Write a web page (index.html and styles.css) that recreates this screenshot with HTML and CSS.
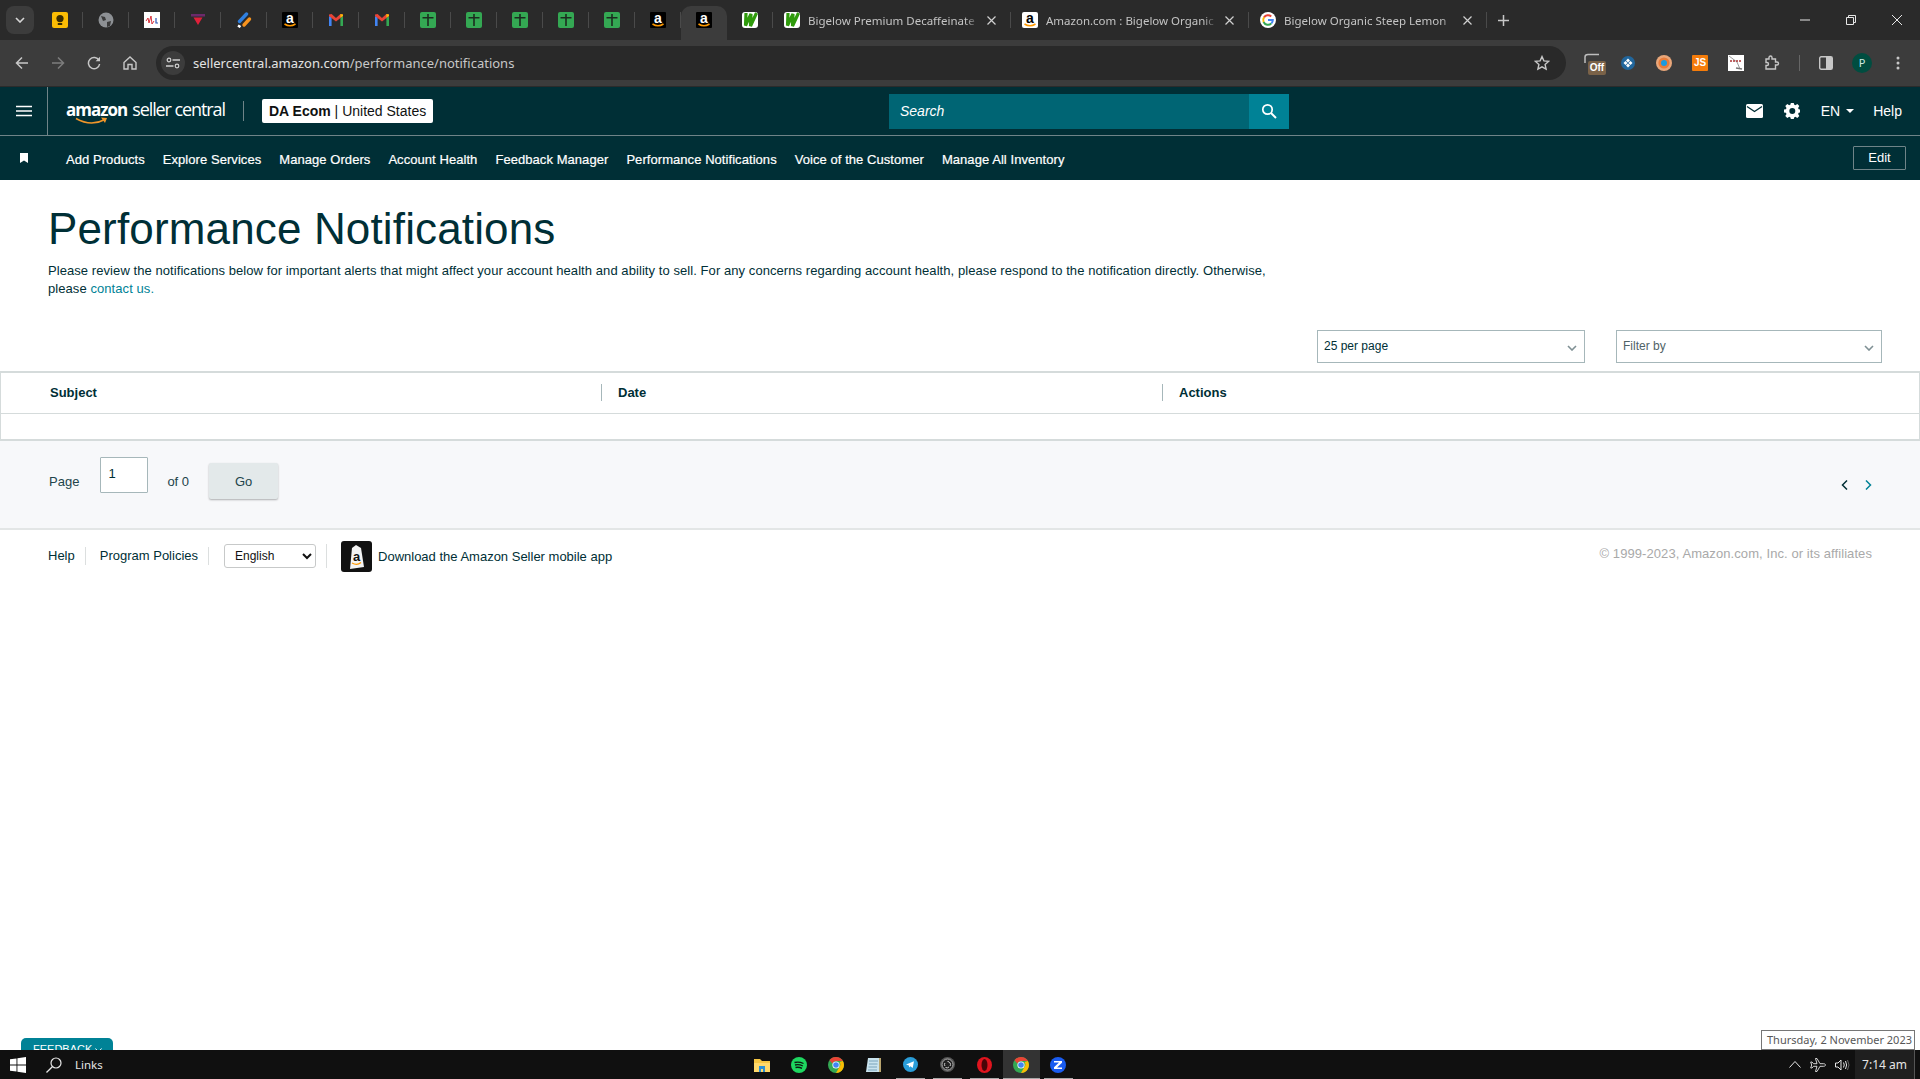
FILE: index.html
```html
<!DOCTYPE html>
<html lang="en">
<head>
    <meta charset="UTF-8">
    <meta name="viewport" content="width=device-width, initial-scale=1.0">
    <title>Performance Notifications</title>
    <link rel="stylesheet" href="styles.css">
</head>
<body>
    <!-- shared favicons -->
    <svg class="sprites" width="0" height="0">
        <symbol id="fav-amazon" viewBox="0 0 16 16">
            <rect width="16" height="16" rx="1" fill="#000"/>
            <text x="8" y="10.5" font-family="Liberation Sans, sans-serif" font-size="14" font-weight="700" fill="#fff" text-anchor="middle">a</text>
            <path d="M2.5 12Q8 15.6 13.5 12" fill="none" stroke="#f90" stroke-width="1.5"/>
        </symbol>
        <symbol id="fav-amazon-white" viewBox="0 0 16 16">
            <rect width="16" height="16" rx="2" fill="#fff"/>
            <text x="8" y="10.5" font-family="Liberation Sans, sans-serif" font-size="14" font-weight="700" fill="#000" text-anchor="middle">a</text>
            <path d="M2.5 12Q8 15.6 13.5 12" fill="none" stroke="#f90" stroke-width="1.5"/>
        </symbol>
        <symbol id="fav-green" viewBox="0 0 16 16">
            <rect width="16" height="16" rx="2" fill="#34a853"/>
            <path d="M7.2 2h1.600v3h4.700v1.500H8.800V14H7.200V6.500H2.500V5h4.700z" fill="#1c2b20"/>
        </symbol>
        <symbol id="fav-gmail" viewBox="0 0 16 16">
            <path d="M1 14V4l2.600 1.600V14z" fill="#4285f4"/>
            <path d="M12.400 14V5.600L15 4v10z" fill="#34a853"/>
            <path d="M1 4l7 5.400L15 4V2.400L12.400 2 8 6 3.600 2 1 2.400z" fill="#ea4335"/>
            <path d="M12.400 5.600L15 4V2.400L12.400 2z" fill="#fbbc04"/>
        </symbol>
        <symbol id="fav-w" viewBox="0 0 16 16">
            <rect width="16" height="16" rx="3" fill="#fff"/>
            <path d="M4 1L3.500 13.500 9 2 8.500 14 14.500 1" fill="none" stroke="#2f9a0c" stroke-width="3.200"/>
        </symbol>
        <symbol id="fav-chrome" viewBox="0 0 16 16">
            <circle cx="8" cy="8" r="8" fill="#34a853"/>
            <path d="M8 0a8 8 0 0 1 6.900 4H8a4 4 0 0 0-3.700 2.500L1.500 3.200A8 8 0 0 1 8 0z" fill="#ea4335"/>
            <path d="M14.900 4A8 8 0 0 1 8 16l3.400-6a4 4 0 0 0 0-5z" fill="#fbbc04"/>
            <circle cx="8" cy="8" r="3.600" fill="#fff"/>
            <circle cx="8" cy="8" r="2.800" fill="#4285f4"/>
        </symbol>
    </svg>

    <!-- browser chrome -->
    <div class="tabstrip">
        <div class="tab-search">
            <svg width="10" height="6" viewBox="0 0 10 6"><path d="M1 1l4 4 4-4" fill="none" stroke="#d6d6d6" stroke-width="1.600"/></svg>
        </div>
        <div class="pinned">
            <svg width="16" height="16" viewBox="0 0 16 16"><rect width="16" height="16" rx="2" fill="#fbbc04"/><circle cx="8" cy="6.600" r="3.600" fill="#3a2c00"/><rect x="5.800" y="11" width="4.400" height="2" fill="#3a2c00"/></svg>
        </div>
        <div class="pinned">
            <svg width="16" height="16" viewBox="0 0 16 16"><circle cx="8" cy="8" r="7.500" fill="#8d9094"/><path d="M3 4l4 1 1 3-3 1zM9 10l4-1-1 5-3 1z" fill="#3a3a3a"/></svg>
        </div>
        <div class="pinned">
            <svg width="16" height="16" viewBox="0 0 16 16"><rect width="16" height="16" fill="#fff"/><path d="M2 9l2-3 1 5 2-7 1 8 2-3" fill="none" stroke="#d8323c"/><path d="M12 6v5h2" fill="none" stroke="#2a55b5" stroke-width="1.200"/></svg>
        </div>
        <div class="pinned">
            <svg width="16" height="16" viewBox="0 0 16 16"><rect x="1" y="2" width="14" height="2.500" fill="#6b2a6b"/><path d="M3.500 5.500h9L8 13z" fill="#e0203a"/></svg>
        </div>
        <div class="pinned">
            <svg width="16" height="16" viewBox="0 0 16 16"><path d="M3.500 9.500L10.500 2" stroke="#2f7fe0" stroke-width="3.400" stroke-linecap="round"/><path d="M8 13L13.500 7" stroke="#f7931e" stroke-width="3.400" stroke-linecap="round"/><path d="M2 13.500l2.500 1.500" stroke="#fff" stroke-width="2.600"/></svg>
        </div>
        <div class="pinned"><svg width="16" height="16"><use href="#fav-amazon"/></svg></div>
        <div class="pinned"><svg width="16" height="16"><use href="#fav-gmail"/></svg></div>
        <div class="pinned"><svg width="16" height="16"><use href="#fav-gmail"/></svg></div>
        <div class="pinned"><svg width="16" height="16"><use href="#fav-green"/></svg></div>
        <div class="pinned"><svg width="16" height="16"><use href="#fav-green"/></svg></div>
        <div class="pinned"><svg width="16" height="16"><use href="#fav-green"/></svg></div>
        <div class="pinned"><svg width="16" height="16"><use href="#fav-green"/></svg></div>
        <div class="pinned"><svg width="16" height="16"><use href="#fav-green"/></svg></div>
        <div class="pinned"><svg width="16" height="16"><use href="#fav-amazon"/></svg></div>
        <div class="pinned pinned-active"><svg width="16" height="16"><use href="#fav-amazon"/></svg></div>
        <div class="pinned"><svg width="16" height="16"><use href="#fav-w"/></svg></div>
        <div class="tab">
            <svg width="16" height="16"><use href="#fav-w"/></svg>
            <span class="tab-title">Bigelow Premium Decaffeinate</span>
            <svg class="tab-close" width="9" height="9" viewBox="0 0 9 9"><path d="M.5.500l8 8M8.500.500l-8 8" stroke="#d0d0d0" stroke-width="1.200"/></svg>
        </div>
        <div class="tab">
            <svg width="16" height="16"><use href="#fav-amazon-white"/></svg>
            <span class="tab-title">Amazon.com : Bigelow Organic</span>
            <svg class="tab-close" width="9" height="9" viewBox="0 0 9 9"><path d="M.5.500l8 8M8.500.500l-8 8" stroke="#d0d0d0" stroke-width="1.200"/></svg>
        </div>
        <div class="tab">
            <svg width="16" height="16" viewBox="0 0 16 16"><circle cx="8" cy="8" r="8" fill="#fff"/><path d="M4 5.400A4.800 4.800 0 0 1 11.200 4.400" fill="none" stroke="#ea4335" stroke-width="2"/><path d="M3.600 10A4.800 4.800 0 0 1 4 5.400" fill="none" stroke="#fbbc04" stroke-width="2"/><path d="M11.400 11.400A4.800 4.800 0 0 1 3.600 10" fill="none" stroke="#34a853" stroke-width="2"/><path d="M8 8h4.800a4.800 4.800 0 0 1-1.400 3.400" fill="none" stroke="#4285f4" stroke-width="2"/></svg>
            <span class="tab-title">Bigelow Organic Steep Lemon</span>
            <svg class="tab-close" width="9" height="9" viewBox="0 0 9 9"><path d="M.5.500l8 8M8.500.500l-8 8" stroke="#d0d0d0" stroke-width="1.200"/></svg>
        </div>
        <div class="tab-new">
            <svg width="11" height="11" viewBox="0 0 11 11"><path d="M5.500 0v11M0 5.500h11" stroke="#c7c7c7" stroke-width="1.500"/></svg>
        </div>
        <div class="win-controls">
            <div class="win-btn"><svg width="10" height="10" viewBox="0 0 10 10"><path d="M0 5h10" stroke="#e6e6e6"/></svg></div>
            <div class="win-btn"><svg width="10" height="10" viewBox="0 0 10 10"><path d="M.5 2.500h7v7h-7zM2.500 2.500v-2h7v7h-2" fill="none" stroke="#e6e6e6"/></svg></div>
            <div class="win-btn"><svg width="10" height="10" viewBox="0 0 10 10"><path d="M0 0l10 10M10 0L0 10" stroke="#e6e6e6"/></svg></div>
        </div>
    </div>

    <div class="toolbar">
        <div class="tool-btn"><svg width="14" height="14" viewBox="0 0 14 14"><path d="M13 7H2M7 1.500L1.500 7 7 12.500" fill="none" stroke="#c7c7c7" stroke-width="1.500"/></svg></div>
        <div class="tool-btn"><svg width="14" height="14" viewBox="0 0 14 14"><path d="M1 7h11M7 1.500L12.500 7 7 12.500" fill="none" stroke="#7d7d7d" stroke-width="1.500"/></svg></div>
        <div class="tool-btn"><svg width="14" height="14" viewBox="0 0 14 14"><path d="M12 4.500A5.600 5.600 0 1 0 12.600 8" fill="none" stroke="#c7c7c7" stroke-width="1.500"/><path d="M13 .8v4.400H8.600z" fill="#c7c7c7"/></svg></div>
        <div class="tool-btn"><svg width="14" height="14" viewBox="0 0 14 14"><path d="M1 6.600L7 1l6 5.600V13H9V8.500H5V13H1z" fill="none" stroke="#c7c7c7" stroke-width="1.400"/></svg></div>
        <div class="urlbar">
            <span class="url-tune">
                <svg width="14" height="12" viewBox="0 0 14 12"><circle cx="3" cy="3" r="1.800" fill="none" stroke="#d0d0d0" stroke-width="1.200"/><path d="M6.500 3H14M0 9h7.500" stroke="#d0d0d0" stroke-width="1.300"/><circle cx="11" cy="9" r="1.800" fill="none" stroke="#d0d0d0" stroke-width="1.200"/></svg>
            </span>
            <span class="url-text">sellercentral.amazon.com<span class="url-path">/performance/notifications</span></span>
            <svg class="url-star" width="16" height="16" viewBox="0 0 16 16"><path d="M8 1.600l1.900 4.300 4.700.5-3.500 3.100 1 4.600L8 11.800l-4.100 2.300 1-4.600L1.400 6.400l4.700-.5z" fill="none" stroke="#c7c7c7" stroke-width="1.400"/></svg>
        </div>
        <div class="tool-btn">
            <span class="ext-off"><svg width="16" height="10" viewBox="0 0 16 10"><path d="M1 10V4q0-2.500 3-2.500h11" fill="none" stroke="#bdbdbd" stroke-width="1.500"/></svg><b>Off</b></span>
        </div>
        <div class="tool-btn"><svg width="14" height="14" viewBox="0 0 14 14"><circle cx="7" cy="7" r="7" fill="#21669c"/><path d="M7 2.500l2 2-2 2-2-2zM7 7.500l2 2-2 2-2-2zM2.500 7l2-2 2 2-2 2zM7.500 7l2-2 2 2-2 2z" fill="#fff"/></svg></div>
        <div class="tool-btn"><svg width="16" height="16" viewBox="0 0 16 16"><circle cx="8" cy="8" r="8" fill="#e9a77a"/><circle cx="8" cy="8" r="5.600" fill="#e87c3a"/><circle cx="8" cy="8" r="3" fill="#1a9be0"/></svg></div>
        <div class="tool-btn"><span class="ext-js">JS</span></div>
        <div class="tool-btn"><svg width="16" height="16" viewBox="0 0 16 16"><rect width="16" height="16" fill="#fff"/><path d="M1 1l8 6 3 7" fill="none" stroke="#9a9a9a"/><path d="M2 6h12" stroke="#a33" stroke-width="1.600" stroke-dasharray="2 1"/><path d="M8 13l6 1" stroke="#777" stroke-width="1.500"/></svg></div>
        <div class="tool-btn"><svg width="16" height="16" viewBox="0 0 16 16"><path d="M2 4h3V2.500a1.500 1.500 0 0 1 3 0V4h3.500v3H13a1.500 1.500 0 0 1 0 3h-1.500v4H2v-3.500h1a1.500 1.500 0 0 0 0-3H2z" fill="none" stroke="#c7c7c7" stroke-width="1.400"/></svg></div>
        <div class="tool-sep"><span></span></div>
        <div class="tool-btn"><svg width="14" height="14" viewBox="0 0 14 14"><rect x=".7" y=".7" width="12.600" height="12.600" rx="1.500" fill="none" stroke="#c7c7c7" stroke-width="1.400"/><rect x="7" y="1" width="6" height="12" fill="#c7c7c7"/></svg></div>
        <div class="tool-btn"><span class="avatar">P</span></div>
        <div class="tool-btn"><svg width="4" height="14" viewBox="0 0 4 14"><circle cx="2" cy="2" r="1.500" fill="#c7c7c7"/><circle cx="2" cy="7" r="1.500" fill="#c7c7c7"/><circle cx="2" cy="12" r="1.500" fill="#c7c7c7"/></svg></div>
    </div>

    <!-- seller central header -->
    <header class="sc-header">
        <div class="menu-cell">
            <svg width="16" height="12" viewBox="0 0 16 12"><path d="M0 1.500h16M0 6h16M0 10.500h16" stroke="#fff" stroke-width="1.700"/></svg>
        </div>
        <div class="logo">
            <span class="logo-amazon">amazon</span><span class="logo-seller">seller central</span>
            <svg class="logo-smile" width="34" height="8" viewBox="0 0 34 8"><path d="M1 1.500Q16 10 30 2.500" fill="none" stroke="#f0962a" stroke-width="1.500"/><path d="M26 .5l6 .5-2 5z" fill="#f0962a"/></svg>
        </div>
        <span class="logo-sep"></span>
        <div class="account-badge"><b>DA Ecom</b> | United States</div>
        <div class="search">
            <div class="search-input">Search</div>
            <div class="search-btn">
                <svg width="16" height="16" viewBox="0 0 16 16"><circle cx="6.500" cy="6.500" r="4.700" fill="none" stroke="#fff" stroke-width="1.700"/><path d="M10 10l5 5" stroke="#fff" stroke-width="1.900"/></svg>
            </div>
        </div>
        <div class="header-right">
            <svg width="17" height="14" viewBox="0 0 17 14"><rect width="17" height="14" rx="1.500" fill="#fff"/><path d="M1 2.500l7.500 5 7.500-5" fill="none" stroke="#002f36" stroke-width="1.400"/></svg>
            <svg class="gear" width="16" height="16" viewBox="0 0 16 16"><path fill="#fff" fill-rule="evenodd" d="M6.600 0h2.800l.4 2.200 1.300.6 1.900-1.200 2 2-1.200 1.900.6 1.300 2.100.4v2.800l-2.100.4-.6 1.300 1.200 1.900-2 2-1.900-1.200-1.300.6-.4 2.200H6.600l-.4-2.200-1.300-.6L3 15.600l-2-2 1.200-1.900-.6-1.300L-.5 10V7.200l2.100-.4.6-1.300L1 3.600l2-2 1.900 1.200 1.300-.6zM8 5.500a3 3 0 1 0 0 6 3 3 0 0 0 0-6z" transform="translate(.3 -.6)"/></svg>
            <span class="lang">EN<i class="caret"></i></span>
            <span class="help">Help</span>
        </div>
    </header>
    <nav class="sc-nav">
        <svg class="nav-mark" width="8" height="10" viewBox="0 0 8 10"><path d="M0 0h8v10L4 7.500 0 10z" fill="#fff"/></svg>
        <a>Add Products</a>
        <a>Explore Services</a>
        <a>Manage Orders</a>
        <a>Account Health</a>
        <a>Feedback Manager</a>
        <a>Performance Notifications</a>
        <a>Voice of the Customer</a>
        <a>Manage All Inventory</a>
        <button class="nav-edit">Edit</button>
    </nav>

    <main class="content">
        <div class="page-head">
            <h1>Performance Notifications</h1>
            <p>Please review the notifications below for important alerts that might affect your account health and ability to sell. For any concerns regarding account health, please respond to the notification directly. Otherwise, please <a href="#">contact us.</a></p>
        </div>

        <div class="table-controls">
            <div class="fake-select select-page">25 per page
                <svg width="10" height="6" viewBox="0 0 10 6"><path d="M1 1l4 4 4-4" fill="none" stroke="#7f9094" stroke-width="1.600"/></svg>
            </div>
            <div class="fake-select select-filter">Filter by
                <svg width="10" height="6" viewBox="0 0 10 6"><path d="M1 1l4 4 4-4" fill="none" stroke="#7f9094" stroke-width="1.600"/></svg>
            </div>
        </div>

        <div class="notif-table">
            <div class="notif-head">
                <div class="col col-subject">Subject</div>
                <div class="col col-date">Date</div>
                <div class="col col-actions">Actions</div>
            </div>
            <div class="notif-empty"></div>
        </div>

        <div class="pager">
            <span class="pager-label">Page</span>
            <input class="pager-input" type="text" value="1">
            <span class="pager-of">of 0</span>
            <button class="pager-go">Go</button>
            <div class="pager-arrows">
                <svg width="7" height="10" viewBox="0 0 7 10"><path d="M6 .5L1.500 5 6 9.500" fill="none" stroke="#002f36" stroke-width="1.500"/></svg>
                <svg width="7" height="10" viewBox="0 0 7 10"><path d="M1 .5L5.500 5 1 9.500" fill="none" stroke="#008296" stroke-width="1.500"/></svg>
            </div>
        </div>

        <footer class="sc-footer">
            <a class="foot-link">Help</a>
            <a class="foot-link">Program Policies</a>
            <div class="foot-cell">
                <select class="foot-select"><option>English</option></select>
            </div>
            <svg class="app-icon" width="31" height="31" viewBox="0 0 31 31">
                <rect width="31" height="31" rx="3" fill="#111"/>
                <path d="M11 7l4-3 5 3 3 19-14 2z" fill="#f3f3f3"/>
                <text x="15.500" y="20" font-family="Liberation Sans, sans-serif" font-size="13" font-weight="700" fill="#111" text-anchor="middle">a</text>
                <path d="M11 22q5 3 9-.5" fill="none" stroke="#f90" stroke-width="1.300"/>
            </svg>
            <span class="app-text">Download the Amazon Seller mobile app</span>
            <span class="copyright">&copy; 1999-2023, Amazon.com, Inc. or its affiliates</span>
        </footer>
    </main>

    <!-- windows taskbar -->
    <div class="feedback">FEEDBACK
        <svg width="7" height="5" viewBox="0 0 7 5"><path d="M.5.500l3 3.500 3-3.500" fill="none" stroke="#fff"/></svg>
    </div>
    <div class="date-tip">Thursday, 2 November 2023</div>
    <div class="taskbar">
        <svg class="win-logo" width="16" height="16" viewBox="0 0 16 16"><path fill="#fff" d="M0 2.300l6.500-.9v6.200H0zM7.400 1.300L16 0v7.600H7.400zM0 8.400h6.500v6.200L0 13.700zM7.400 8.400H16V16l-8.600-1.300z"/></svg>
        <svg class="task-search" width="16" height="16" viewBox="0 0 16 16"><circle cx="10" cy="6" r="5" fill="none" stroke="#e6e6e6" stroke-width="1.200"/><path d="M6.300 9.700L.5 15.500" stroke="#e6e6e6" stroke-width="1.300"/></svg>
        <span class="task-links">Links</span>
        <div class="task-apps">
            <div class="task-app"><svg width="16" height="14" viewBox="0 0 16 14"><path d="M0 1h6l2 2h8v11H0z" fill="#f5c543"/><path d="M0 5h16v9H0z" fill="#ffd96b"/><path d="M5 8h6v6H9v-3H7v3H5z" fill="#2a8fd6"/></svg></div>
            <div class="task-app"><svg width="16" height="16" viewBox="0 0 16 16"><circle cx="8" cy="8" r="8" fill="#1ed760"/><path d="M3.500 5.500q4.500-1.200 9 1M4 8q4-1 7.800 1M4.500 10.500q3.500-.8 6.500.9" fill="none" stroke="#0c1a10" stroke-width="1.300"/></svg></div>
            <div class="task-app"><svg width="16" height="16"><use href="#fav-chrome"/></svg></div>
            <div class="task-app"><svg width="15" height="16" viewBox="0 0 15 16"><path d="M2 1h12v14H0z" fill="#c9e3ee"/><path d="M13 1h2v14h-2z" fill="#b9a56f"/><path d="M3 4h9M3 7h8.500M2.500 10H11M2 13h9" stroke="#7aa4bb"/></svg></div>
            <div class="task-app open"><svg width="15" height="15" viewBox="0 0 15 15"><circle cx="7.500" cy="7.500" r="7.500" fill="#2a9dd8"/><path d="M3 7.500l8-3.200-1.300 6.700-2.300-1.700-1.200 1.200-.3-2z" fill="#fff"/></svg></div>
            <div class="task-app open"><svg width="15" height="15" viewBox="0 0 15 15"><circle cx="7.500" cy="7.500" r="7.500" fill="#555"/><circle cx="7.500" cy="7.500" r="5.500" fill="#222" stroke="#aaa"/><path d="M7.500 4.500a3 3 0 0 1 2.600 4.500M4.900 9a3 3 0 0 1 0-3M5.500 10.500a3 3 0 0 0 3.500-.5" fill="none" stroke="#ccc"/></svg></div>
            <div class="task-app open"><svg width="15" height="16" viewBox="0 0 15 16"><ellipse cx="7.500" cy="8" rx="7.500" ry="8" fill="#e0141e"/><ellipse cx="7.500" cy="8" rx="3" ry="6" fill="#4a0508"/></svg></div>
            <div class="task-app open task-app-active"><svg width="16" height="16"><use href="#fav-chrome"/></svg></div>
            <div class="task-app open"><svg width="16" height="16" viewBox="0 0 16 16"><circle cx="8" cy="8" r="8" fill="#1a5cf0"/><path d="M4 4h8v1.800L7 10.500h5V12H4v-1.800L9 5.500H4z" fill="#fff"/></svg></div>
        </div>
        <div class="tray">
            <svg width="12" height="7" viewBox="0 0 12 7"><path d="M.5 6.500l5.500-6 5.500 6" fill="none" stroke="#e6e6e6"/></svg>
            <svg width="16" height="14" viewBox="0 0 16 14"><path d="M15.500 7c0-.8-1-1.300-2-1.300H10L7 .5H5.500l1.500 5.200H3.500L2 4H.7l1 3-1 3H2l1.500-1.700H7L5.500 13.500H7l3-5.200h3.500c1 0 2-.5 2-1.300z" fill="none" stroke="#e6e6e6" stroke-width=".9"/></svg>
            <svg width="16" height="12" viewBox="0 0 16 12"><path d="M.5 4h2.500L6 1v10L3 8H.5z" fill="none" stroke="#e6e6e6"/><path d="M8.500 3.500q1.500 2.500 0 5M10.500 2q2.200 4 0 8" fill="none" stroke="#e6e6e6"/><path d="M12.500 1q3 5 0 10" fill="none" stroke="#666"/></svg>
            <span class="clock">7:14 am</span>
        </div>
    </div>
</body>
</html>
```

FILE: styles.css
```css
* {
    box-sizing: border-box;
}
html, body {
    margin: 0;
    height: 100%;
}
body {
    display: flex;
    flex-direction: column;
    position: relative;
    overflow: hidden;
    font-family: "Liberation Sans", Arial, sans-serif;
    font-size: 13px;
    color: #002f36;
    background: #fff;
}
.sprites {
    position: absolute;
}

/* browser tabs */
.tabstrip {
    display: flex;
    align-items: center;
    height: 40px;
    padding-left: 6px;
    background: #2a2a2a;
    font-family: "Noto Sans", sans-serif;
    font-size: 11.5px;
    color: #c4c4c4;
}
.tab-search {
    display: flex;
    align-items: center;
    justify-content: center;
    width: 28px;
    height: 28px;
    margin: 0 2.5px 0 0;
    border-radius: 8px;
    background: #3c3c3c;
}
.pinned {
    display: flex;
    align-items: center;
    justify-content: center;
    flex: none;
    width: 46px;
    height: 40px;
    position: relative;
}
.pinned::after, .tab::after {
    content: "";
    position: absolute;
    right: 0;
    top: 12px;
    height: 16px;
    width: 1px;
    background: #4a4a4a;
}
.pinned-active {
    height: 34px;
    margin-top: 6px;
    padding-bottom: 6px;
    border-radius: 10px 10px 0 0;
    background: #3c3c3c;
}
.pinned-active::after {
    display: none;
}
.tab {
    display: flex;
    align-items: center;
    flex: none;
    position: relative;
    width: 238px;
    height: 40px;
    padding: 0 15px 0 11.5px;
}
.tab svg {
    flex: none;
}
.tab-title {
    flex: 1;
    margin-left: 8px;
    overflow: hidden;
    white-space: nowrap;
    -webkit-mask-image: linear-gradient(to right, #000 92%, transparent);
    mask-image: linear-gradient(to right, #000 92%, transparent);
}
.tab-close {
    margin-left: 8px;
}
.tab-new {
    display: flex;
    margin-left: 11px;
}
.win-controls {
    display: flex;
    margin-left: auto;
}
.win-btn {
    display: flex;
    align-items: center;
    justify-content: center;
    width: 46px;
    height: 40px;
}

/* browser toolbar */
.toolbar {
    display: flex;
    align-items: center;
    height: 47px;
    padding: 0 4px 1px;
    background: #3c3c3c;
    border-bottom: 1px solid #2b2b2b;
}
.tool-btn {
    display: flex;
    align-items: center;
    justify-content: center;
    flex: none;
    width: 36px;
    height: 34px;
}
.tool-sep {
    display: flex;
    justify-content: center;
    width: 18px;
}
.tool-sep span {
    width: 1px;
    height: 16px;
    background: #666;
}
.urlbar {
    display: flex;
    align-items: center;
    flex: 1;
    height: 34px;
    margin: 0 8px;
    padding: 0 16px 0 5px;
    border-radius: 17px;
    background: #292929;
    font-family: "Noto Sans", sans-serif;
    font-size: 13px;
    color: #e3e3e3;
}
.url-tune {
    display: flex;
    align-items: center;
    justify-content: center;
    width: 24px;
    height: 24px;
    margin-right: 8px;
    border-radius: 50%;
    background: #3c3c3c;
}
.url-path {
    color: #c7c7c7;
}
.url-star {
    margin-left: auto;
}
.ext-off {
    display: block;
    position: relative;
    width: 22px;
    height: 22px;
    margin-left: 6px;
    margin-top: 2px;
}
.ext-off svg {
    position: absolute;
    top: 0;
    left: 0;
}
.ext-off b {
    position: absolute;
    right: 0;
    bottom: 0;
    width: 18px;
    height: 14px;
    border-radius: 2px;
    background: #7a6248;
    color: #fff;
    font-size: 10px;
    line-height: 14px;
    text-align: center;
}
.ext-js {
    width: 16px;
    height: 16px;
    border-radius: 1px;
    background: #f57c0a;
    color: #fff;
    font-size: 10px;
    font-weight: 700;
    line-height: 16px;
    text-align: center;
}
.avatar {
    width: 20px;
    height: 20px;
    border-radius: 50%;
    background: #004d40;
    color: #cfe8e0;
    font-family: "Noto Sans", sans-serif;
    font-size: 11px;
    line-height: 20px;
    text-align: center;
}

/* seller central header */
.sc-header {
    display: flex;
    align-items: center;
    height: 49px;
    background: #002f36;
    border-bottom: 1px solid #6f8488;
    color: #fff;
}
.menu-cell {
    display: flex;
    align-items: center;
    align-self: stretch;
    width: 48px;
    padding-left: 16px;
    border-right: 1px solid #6f8488;
}
.logo {
    position: relative;
    display: flex;
    align-items: baseline;
    width: 159px;
    margin-left: 18px;
    margin-top: -4px;
    font-family: "Open Sans", sans-serif;
    line-height: 24px;
    white-space: nowrap;
}
.logo-amazon {
    font-size: 17px;
    font-weight: 700;
    letter-spacing: -1px;
}
.logo-seller {
    margin-left: 5px;
    font-size: 18px;
    letter-spacing: -1.1px;
}
.logo-smile {
    position: absolute;
    left: 9px;
    top: 20px;
}
.logo-sep {
    width: 1px;
    height: 20px;
    margin: 0 18px;
    background: #6f8488;
}
.account-badge {
    width: 171px;
    height: 24px;
    padding-left: 7px;
    border-radius: 2px;
    background: #fff;
    color: #0f1111;
    font-size: 14px;
    line-height: 24px;
    white-space: nowrap;
}
.search {
    display: flex;
    height: 35px;
    margin-left: 456px;
}
.search-input {
    width: 360px;
    padding-left: 11px;
    background: #006574;
    font-size: 14px;
    font-style: italic;
    line-height: 35px;
}
.search-btn {
    display: flex;
    align-items: center;
    justify-content: center;
    width: 40px;
    background: #008296;
}
.header-right {
    display: flex;
    align-items: center;
    margin-left: auto;
    padding-right: 18px;
    font-size: 14px;
}
.gear {
    margin-left: 21px;
}
.lang {
    display: flex;
    align-items: center;
    margin-left: 21px;
}
.caret {
    margin-left: 6px;
    border: 4px solid transparent;
    border-top: 4px solid #fff;
    border-bottom: 0;
}
.help {
    margin-left: 19px;
}

/* shortcut nav */
.sc-nav {
    display: flex;
    align-items: center;
    height: 44px;
    padding: 0 14px 0 20px;
    background: #002f36;
    color: #fff;
    font-size: 13px;
}
.sc-nav a {
    margin-right: 18px;
    padding-top: 2px;
    letter-spacing: .06px;
    -webkit-text-stroke: .2px #fff;
}
.nav-mark {
    margin: -1px 38px 0 0;
}
.nav-edit {
    width: 53px;
    height: 24px;
    margin: 0 0 0 auto;
    padding: 0 0 2px;
    border: 1px solid #6f8488;
    border-radius: 1px;
    background: transparent;
    color: #fff;
    font-family: inherit;
    font-size: 13px;
}

/* page */
.content {
    flex: 1;
}
.page-head {
    padding: 24px 48px 0;
}
.page-head h1 {
    margin: 0;
    font-size: 44px;
    font-weight: 400;
    letter-spacing: .15px;
    line-height: 50px;
}
.page-head p {
    width: 1225px;
    margin: 8px 0 0;
    font-size: 13px;
    letter-spacing: .07px;
    line-height: 18px;
}
.page-head a {
    color: #008296;
    text-decoration: none;
}
.table-controls {
    display: flex;
    justify-content: flex-end;
    gap: 31px;
    margin-top: 32px;
    padding-right: 38px;
}
.fake-select {
    display: flex;
    align-items: center;
    justify-content: space-between;
    height: 33px;
    padding: 0 7px 2px 6px;
    border: 1px solid #a6b7ba;
    font-size: 12px;
}
.fake-select svg {
    margin-top: 4px;
}
.select-page {
    width: 268px;
}
.select-filter {
    width: 266px;
    color: #4f6367;
}
.notif-table {
    margin-top: 8px;
    border: 1px solid #d5dbdb;
    border-top-width: 2px;
    border-bottom-width: 2px;
}
.notif-head {
    display: flex;
    align-items: center;
    height: 41px;
    padding-bottom: 2px;
    border-bottom: 1px solid #d5dbdb;
    font-weight: 700;
}
.col {
    position: relative;
    padding-left: 17px;
}
.col-subject {
    width: 600px;
    padding-left: 49px;
}
.col-date {
    width: 561px;
}
.col-date::before, .col-actions::before {
    content: "";
    position: absolute;
    left: 0;
    top: -1px;
    width: 1px;
    height: 17px;
    background: #a6b7ba;
}
.notif-empty {
    height: 25px;
}
.pager {
    display: flex;
    height: 89px;
    padding: 16px 38px 0 49px;
    background: #f7f8fa;
    border-bottom: 2px solid #e3e6e6;
    font-size: 13px;
    color: #22444a;
}
.pager-label {
    margin-top: 17px;
}
.pager-input {
    width: 48px;
    height: 36px;
    margin-left: 21px;
    padding: 0 0 4px 7px;
    border: 1px solid #a6b7ba;
    border-radius: 1px;
    background: #fff;
    color: #002f36;
    font-family: inherit;
    font-size: 13px;
}
.pager-of {
    margin: 17px 0 0 19px;
}
.pager-go {
    width: 69px;
    height: 36px;
    margin: 6px 0 0 20px;
    border: 0;
    border-radius: 2px;
    background: #e3e9ea;
    box-shadow: 0 1px 2px rgba(0,0,0,.3);
    color: #22444a;
    font-family: inherit;
    font-size: 13px;
}
.pager-arrows {
    display: flex;
    gap: 17px;
    margin: 23px 10px 0 auto;
    height: 10px;
}
.sc-footer {
    display: flex;
    align-items: center;
    height: 52px;
    padding: 0 48px;
}
.foot-link {
    display: block;
    padding-right: 10px;
    margin-right: 14px;
    border-right: 1px solid #dcdfdf;
    line-height: 18px;
}
.foot-cell {
    display: flex;
    margin-left: 1px;
    padding-right: 10px;
    margin-right: 14px;
    border-right: 1px solid #dcdfdf;
}
.foot-select {
    width: 92px;
    height: 24px;
    padding-left: 6px;
    border: 1px solid #c7c9c9;
    border-radius: 3px;
    background: #fff;
    color: #111;
    font-family: inherit;
    font-size: 12px;
}
.app-icon {
    flex: none;
}
.app-text {
    margin-left: 6px;
}
.copyright {
    margin: -6px 0 0 auto;
    color: #a9a9a9;
    letter-spacing: .08px;
}

/* windows taskbar */
.taskbar {
    display: flex;
    align-items: center;
    flex: none;
    position: relative;
    z-index: 2;
    height: 29px;
    padding-left: 10px;
    background: #101010;
    color: #e6e6e6;
    font-family: "Noto Sans", sans-serif;
    font-size: 12px;
}
.task-search {
    margin-left: 20px;
}
.task-links {
    margin-left: 13px;
    font-size: 11.5px;
}
.task-apps {
    display: flex;
    position: absolute;
    left: 743.5px;
    bottom: 0;
}
.task-app {
    display: flex;
    align-items: center;
    justify-content: center;
    position: relative;
    width: 37px;
    height: 29px;
}
.task-app.open::after {
    content: "";
    position: absolute;
    left: 4px;
    right: 4px;
    bottom: 0;
    height: 1.5px;
    background: #a8a8a8;
}
.task-app-active {
    background: #333;
}
.task-app-active.open::after {
    left: 0;
    right: 0;
}
.tray {
    display: flex;
    align-items: center;
    gap: 9px;
    align-self: stretch;
    margin-left: auto;
    padding-right: 5px;
}
.clock {
    display: flex;
    align-items: center;
    align-self: stretch;
    justify-content: center;
    width: 60px;
    margin-left: -5px;
    background: #1f1f1f;
    border-right: 1px solid #555;
}
.feedback {
    position: absolute;
    left: 21px;
    top: 1038px;
    width: 92px;
    height: 21px;
    padding: 4px 0 0 12px;
    border-radius: 5px 5px 0 0;
    background: #008296;
    color: #fff;
    font-size: 11px;
    line-height: 14px;
    white-space: nowrap;
}
.date-tip {
    position: absolute;
    right: 5px;
    bottom: 29px;
    width: 154px;
    height: 20px;
    padding-left: 3px;
    border: 1px solid #767676;
    background: #fff;
    color: #575757;
    font-family: "Noto Sans", sans-serif;
    font-size: 11px;
    line-height: 18px;
    text-align: center;
    white-space: nowrap;
}
```
